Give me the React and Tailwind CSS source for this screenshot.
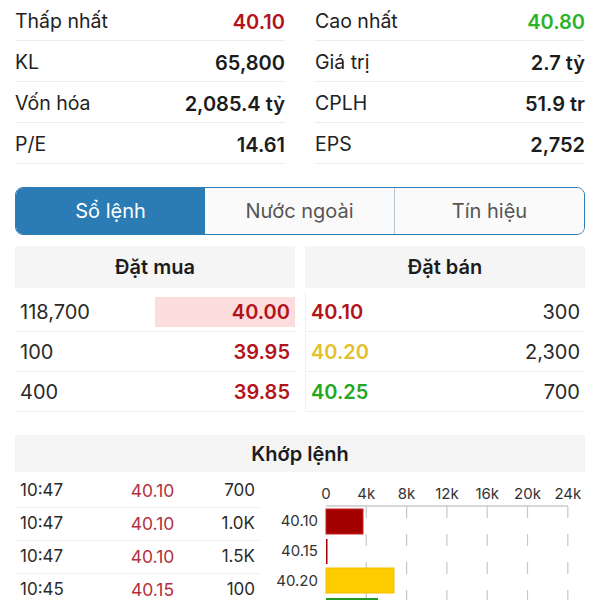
import React from 'react';

const stats = [
  [{ label: 'Thấp nhất', value: '40.10', color: 'text-[#b3131b]' }, { label: 'Cao nhất', value: '40.80', color: 'text-[#2bb32b]' }],
  [{ label: 'KL', value: '65,800' }, { label: 'Giá trị', value: '2.7 tỷ' }],
  [{ label: 'Vốn hóa', value: '2,085.4 tỷ' }, { label: 'CPLH', value: '51.9 tr' }],
  [{ label: 'P/E', value: '14.61' }, { label: 'EPS', value: '2,752' }],
];

const buys = [
  { qty: '118,700', price: '40.00', hl: true },
  { qty: '100', price: '39.95' },
  { qty: '400', price: '39.85' },
];

const sells = [
  { price: '40.10', qty: '300', color: 'text-[#b3131b]' },
  { price: '40.20', qty: '2,300', color: 'text-[#e2c12c]' },
  { price: '40.25', qty: '700', color: 'text-[#24a824]' },
];

const trades = [
  ['10:47', '40.10', '700'],
  ['10:47', '40.10', '1.0K'],
  ['10:47', '40.10', '1.5K'],
  ['10:45', '40.15', '100'],
];

const ticks = ['0', '4k', '8k', '12k', '16k', '20k', '24k'];

function StatCol({ items }) {
  return (
    <div className="flex flex-col">
      {items.map((s) => (
        <div key={s.label} className="h-[41px] pt-[3px] border-b border-[#ececec] flex items-center justify-between">
          <span className="text-[19.5px] text-[#222]">{s.label}</span>
          <span className={`text-[20px] font-semibold ${s.color || 'text-[#1c1c1c]'}`}>{s.value}</span>
        </div>
      ))}
    </div>
  );
}

function Chart() {
  const x0 = 51;
  const step = 40.3;
  return (
    <svg width="310" height="126" className="block">
      {ticks.map((t, i) => (
        <text key={t} x={x0 + i * step} y="24" textAnchor="middle" fontSize="15" fill="#333" fontFamily="Inter, sans-serif">{t}</text>
      ))}
      <line x1={x0} y1="31" x2={x0 + 6 * step} y2="31" stroke="#c8c8c8" strokeWidth="1.5" />
      {ticks.slice(1).map((t, i) => (
        <line key={t} x1={x0 + (i + 1) * step} y1="31" x2={x0 + (i + 1) * step} y2="126" stroke="#c8c8c8" strokeWidth="1.2" strokeDasharray="12 16" />
      ))}
      <rect x={x0} y="34" width="37" height="25" fill="#a30000" stroke="#c22" strokeWidth="1" />
      <rect x={x0} y="64" width="1.5" height="25" fill="#a30000" />
      <rect x={x0} y="93" width="68" height="25" fill="#ffcc00" stroke="#f0c000" strokeWidth="1" />
      <rect x={x0} y="123" width="52" height="25" fill="#229922" />
      {['40.10', '40.15', '40.20'].map((p, i) => (
        <text key={p} x="43" y={51 + i * 30} textAnchor="end" fontSize="15" fill="#333" fontFamily="Inter, sans-serif">{p}</text>
      ))}
    </svg>
  );
}

export default function App() {
  return (
    <div className="w-[600px] h-[600px] overflow-hidden bg-white px-[15px] text-[20px] font-['Inter',sans-serif]">
      {/* stats */}
      <div className="grid grid-cols-2 gap-[30px]">
        <StatCol items={stats.map((r) => r[0])} />
        <StatCol items={stats.map((r) => r[1])} />
      </div>

      {/* tabs */}
      <div className="mt-[23px] h-12 flex rounded-lg border border-[#2f7db5] overflow-hidden">
        <div className="flex-1 bg-[#2b7bb5] text-white flex items-center justify-center">Sổ lệnh</div>
        <div className="flex-1 bg-[#fafafa] text-[#555] flex items-center justify-center border-r border-[#b7c7d4]">Nước ngoài</div>
        <div className="flex-1 bg-[#fafafa] text-[#555] flex items-center justify-center">Tín hiệu</div>
      </div>

      {/* order book */}
      <div className="mt-[11px] grid grid-cols-2 gap-[10px]">
        <div>
          <div className="h-[42px] bg-[#f5f5f5] flex items-center justify-center font-semibold text-[#1c1c1c]">Đặt mua</div>
          <div className="mt-[4px]">
            {buys.map((b) => (
              <div key={b.qty} className="h-10 border-b border-[#f0f0f0] flex items-center justify-between pl-[5px]">
                <span className="text-[#2a2a2a]">{b.qty}</span>
                <span className={`h-[30px] w-[140px] flex items-center justify-end pr-[5px] font-semibold text-[#b3131b] ${b.hl ? 'bg-[#fcdcdc]' : ''}`}>{b.price}</span>
              </div>
            ))}
          </div>
        </div>
        <div>
          <div className="h-[42px] bg-[#f5f5f5] flex items-center justify-center font-semibold text-[#1c1c1c]">Đặt bán</div>
          <div className="mt-[4px] border-l border-[#f0f0f0]">
            {sells.map((s) => (
              <div key={s.price} className="h-10 border-b border-[#f0f0f0] flex items-center justify-between pl-[5px] pr-[5px]">
                <span className={`font-semibold ${s.color}`}>{s.price}</span>
                <span className="text-[#2a2a2a]">{s.qty}</span>
              </div>
            ))}
          </div>
        </div>
      </div>

      {/* matched orders */}
      <div className="mt-[23px] h-[37px] bg-[#f5f5f5] flex items-center justify-center font-semibold text-[#1c1c1c]">Khớp lệnh</div>
      <div className="mt-[3px] flex">
        <div className="w-[245px] text-[17px]">
          {trades.map((t, i) => (
            <div key={i} className="h-[33px] border-b border-[#f0f0f0] flex items-center px-[5px]">
              <span className="w-[100px] text-[#2a2a2a]">{t[0]}</span>
              <span className="w-[65px] text-center text-[17.5px] text-[#b5303a]">{t[1]}</span>
              <span className="flex-1 text-right text-[#2a2a2a]">{t[2]}</span>
            </div>
          ))}
        </div>
        <div className="ml-[15px]">
          <Chart />
        </div>
      </div>
    </div>
  );
}
